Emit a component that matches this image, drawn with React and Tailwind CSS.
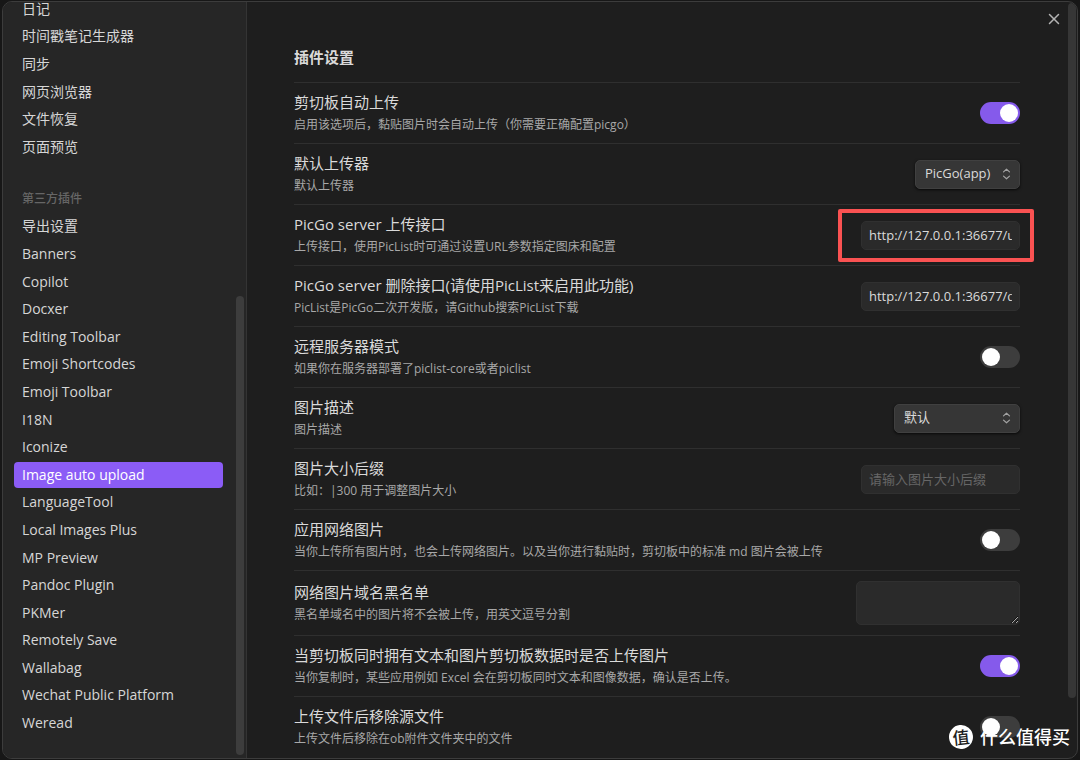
import { X } from 'lucide-react';

const coreItems = ['日记', '时间戳笔记生成器', '同步', '网页浏览器', '文件恢复', '页面预览'];

const pluginItems = [
  '导出设置',
  'Banners',
  'Copilot',
  'Docxer',
  'Editing Toolbar',
  'Emoji Shortcodes',
  'Emoji Toolbar',
  'I18N',
  'Iconize',
  'Image auto upload',
  'LanguageTool',
  'Local Images Plus',
  'MP Preview',
  'Pandoc Plugin',
  'PKMer',
  'Remotely Save',
  'Wallabag',
  'Wechat Public Platform',
  'Weread',
];

const NavItem = ({ label, active }) => (
  <li className="flex flex-1 items-center">
    <a
      href="#"
      className={
        active
          ? 'flex h-[26px] w-full items-center whitespace-nowrap rounded bg-[#8b5cf6] px-2 text-white'
          : 'flex h-[26px] w-full items-center whitespace-nowrap rounded px-2 text-[#d6d6d6] hover:bg-[#303030]'
      }
    >
      {label}
    </a>
  </li>
);

const Sidebar = () => (
  <aside className="flex w-[244px] shrink-0 overflow-hidden border-r border-[#343434] bg-[#262626] text-sm">
    <nav className="-mt-[7px] mb-[21px] flex flex-1 flex-col pl-[11px] pr-[13px]">
      <ul className="flex flex-6 flex-col">
        {coreItems.map((item) => (
          <NavItem key={item} label={item} />
        ))}
      </ul>
      <h3 className="flex h-[52px] shrink-0 items-center px-2 pt-6 text-xs font-medium text-[#666666]">
        第三方插件
      </h3>
      <ul className="flex flex-19 flex-col">
        {pluginItems.map((item) => (
          <NavItem key={item} label={item} active={item === 'Image auto upload'} />
        ))}
      </ul>
    </nav>
    {/* Scrollbar */}
    <div className="flex w-2 flex-col justify-end pb-[3px] mr-[2px]">
      <div className="h-[61%] rounded-full bg-[#3d3d3d]" />
    </div>
  </aside>
);

const Setting = ({ id, name, desc, children }) => (
  <div className="flex items-center justify-between gap-4 border-t border-[#2f2f2f] py-[10px]">
    <div className="min-w-0">
      <label htmlFor={id} className="block text-[15px] leading-[19px] text-[#dadada]">
        {name}
      </label>
      <p className="mt-1 text-xs leading-[17px] text-[#a8a8a8]">{desc}</p>
    </div>
    <div className="relative flex shrink-0">{children}</div>
  </div>
);

const Toggle = ({ id, on }) => (
  <input
    id={id}
    type="checkbox"
    role="switch"
    defaultChecked={on}
    className="flex h-[22px] w-10 appearance-none items-center rounded-full bg-[#3d3d3d] px-[2px] before:size-[18px] before:rounded-full before:bg-white checked:justify-end checked:bg-[#855aeb]"
  />
);

const Dropdown = ({ id, value, width }) => (
  <>
    <select
      id={id}
      defaultValue={value}
      className={`${width} h-[29px] appearance-none rounded-[5px] border border-[#404040] bg-[#363636] pl-[9px] pr-6 text-[13px] text-[#dadada] shadow-sm shadow-black/60`}
    >
      <option>{value}</option>
    </select>
    <svg
      className="pointer-events-none absolute right-[9px] top-2 h-3 w-[9px]"
      viewBox="0 0 9 12"
      fill="none"
      stroke="#a3a3a3"
      strokeWidth="1.2"
      strokeLinecap="round"
      strokeLinejoin="round"
    >
      <path d="M1.5 3.9 4.5 1.2 7.5 3.9M1.5 8.1 4.5 10.8 7.5 8.1" />
    </svg>
  </>
);

const TextInput = ({ id, value, placeholder }) => (
  <input
    id={id}
    type="text"
    defaultValue={value}
    placeholder={placeholder}
    className="h-[29px] w-[159px] rounded-[5px] border border-[#303030] bg-[#2a2a2a] px-[7px] text-[13px] text-[#dadada] placeholder:text-[#666666]"
  />
);

const Watermark = () => (
  <div className="pointer-events-none absolute bottom-[9px] right-[10px] flex items-center gap-[7px] text-white">
    <span className="flex size-6 -rotate-6 items-center justify-center rounded-full bg-white text-[17px] font-medium leading-none text-[#1e1e1e]">
      值
    </span>
    <span className="text-lg font-medium leading-7">什么值得买</span>
  </div>
);

export default function App() {
  return (
    <div className="relative h-screen overflow-hidden bg-[#171717] px-[2px] py-px font-['Open_Sans','Noto_Sans_CJK_SC',sans-serif] [color-scheme:dark]">
      <div className="relative flex h-full overflow-hidden rounded-[10px] border border-[#3c3c3c] bg-[#1e1e1e]">
        <Sidebar />
        <main className="min-w-0 flex-1 overflow-hidden pl-[47px] pr-12 pt-[45px]">
          <h2 className="mb-[14px] text-[15px] font-bold leading-[21px] text-[#dadada]">插件设置</h2>
          <Setting id="auto" name="剪切板自动上传" desc="启用该选项后，黏贴图片时会自动上传（你需要正确配置picgo）">
            <Toggle id="auto" on />
          </Setting>
          <Setting id="uploader" name="默认上传器" desc="默认上传器">
            <Dropdown id="uploader" value="PicGo(app)" width="w-[105px]" />
          </Setting>
          <Setting id="upload-url" name="PicGo server 上传接口" desc="上传接口，使用PicList时可通过设置URL参数指定图床和配置">
            <TextInput id="upload-url" value="http://127.0.0.1:36677/upload" />
            <div className="pointer-events-none absolute -bottom-3 -left-[23px] -right-[14px] -top-3 rounded-[2px] border-4 border-[#fa5252]" />
          </Setting>
          <Setting
            id="delete-url"
            name="PicGo server 删除接口(请使用PicList来启用此功能)"
            desc="PicList是PicGo二次开发版，请Github搜索PicList下载"
          >
            <TextInput id="delete-url" value="http://127.0.0.1:36677/delete" />
          </Setting>
          <Setting id="remote" name="远程服务器模式" desc="如果你在服务器部署了piclist-core或者piclist">
            <Toggle id="remote" />
          </Setting>
          <Setting id="caption" name="图片描述" desc="图片描述">
            <Dropdown id="caption" value="默认" width="w-[126px]" />
          </Setting>
          <Setting id="suffix" name="图片大小后缀" desc="比如：|300 用于调整图片大小">
            <TextInput id="suffix" placeholder="请输入图片大小后缀" />
          </Setting>
          <Setting
            id="network"
            name="应用网络图片"
            desc="当你上传所有图片时，也会上传网络图片。以及当你进行黏贴时，剪切板中的标准 md 图片会被上传"
          >
            <Toggle id="network" />
          </Setting>
          <Setting id="blacklist" name="网络图片域名黑名单" desc="黑名单域名中的图片将不会被上传，用英文逗号分割">
            <textarea
              id="blacklist"
              className="h-11 w-[164px] resize rounded-[5px] border border-[#303030] bg-[#2a2a2a] px-2 py-1 text-[13px] text-[#dadada]"
            />
          </Setting>
          <Setting
            id="both"
            name="当剪切板同时拥有文本和图片剪切板数据时是否上传图片"
            desc="当你复制时，某些应用例如 Excel 会在剪切板同时文本和图像数据，确认是否上传。"
          >
            <Toggle id="both" on />
          </Setting>
          <Setting id="remove" name="上传文件后移除源文件" desc="上传文件后移除在ob附件文件夹中的文件">
            <Toggle id="remove" />
          </Setting>
        </main>
        {/* Scrollbar */}
        <div className="mr-px w-2 shrink-0 pt-px">
          <div className="h-[92%] rounded-full bg-[#363636]" />
        </div>
        <button
          type="button"
          aria-label="关闭"
          className="absolute right-[14px] top-2 flex size-[18px] items-center justify-center text-[#b3b3b3]"
        >
          <X className="size-[18px]" strokeWidth={2} />
        </button>
      </div>
      <Watermark />
    </div>
  );
}
